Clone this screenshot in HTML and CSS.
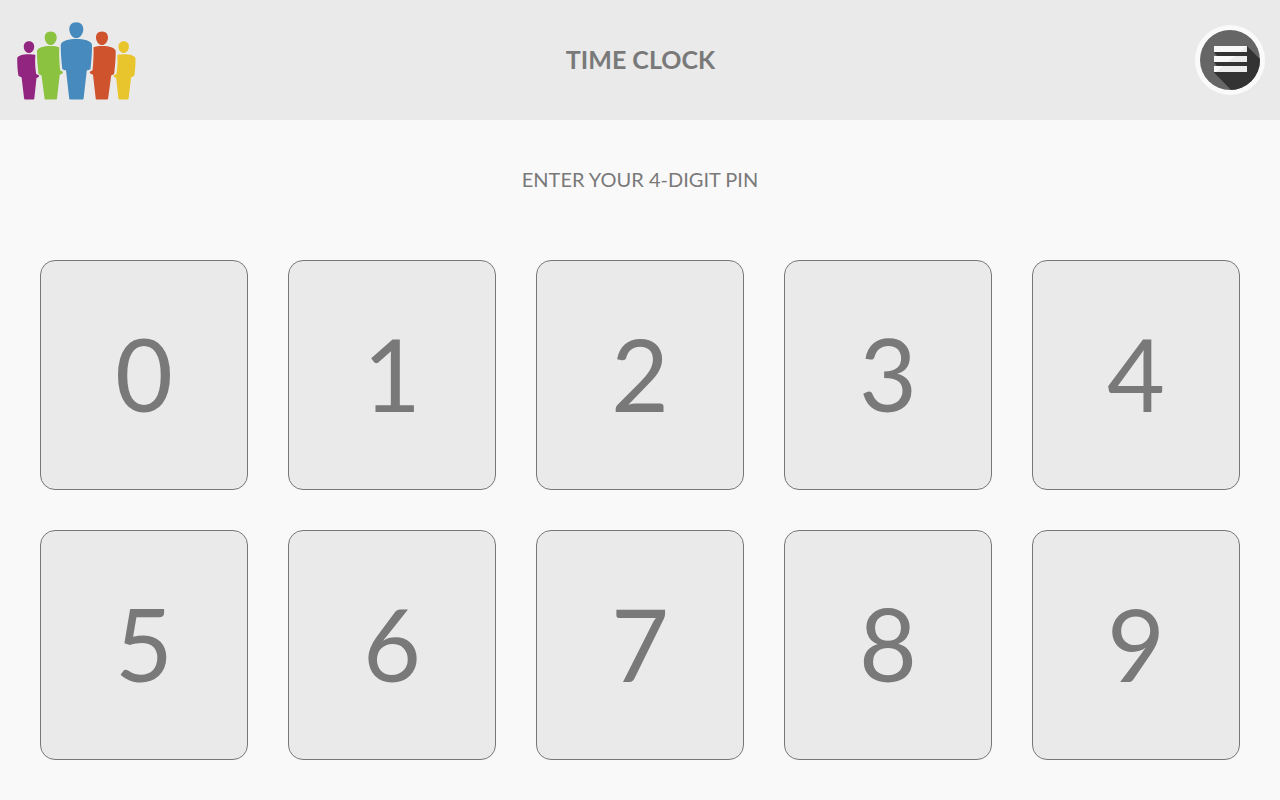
FILE: index.html
```html
<!DOCTYPE html>
<html lang="en">
<head>
<meta charset="utf-8">
<meta name="viewport" content="width=device-width, initial-scale=1">
<title>Time Clock</title>
<link rel="stylesheet" href="styles.css">
</head>
<body>
<header class="header">
  <svg class="logo" viewBox="16 20 121 80" role="img" aria-label="Company logo">
    <defs>
      <g id="outer">
        <path d="M29 41.300c3.500 0 5.400 2.600 5.200 5.700-.2 3.400-2.500 6.100-5.200 6.100s-5-2.700-5.200-6.100c-.2-3.100 1.700-5.700 5.200-5.700z"/>
        <path d="M17.200 58.500c.2-2.800 5.800-4.200 11-4.200 3 0 5.200.2 7.200.6-.6 6-.2 12.200.7 18.500.2 1 3.200 1.300 3.100 2.300-.2 1.500-1.800 2-2.700 2.300L34.300 98.500q-.1.900-1 .9h-8.200q-.9 0-1-.9L21.600 77.500l-3.200-1.700c-.8-5.700-1.300-11.500-1.200-17.300z"/>
      </g>
      <g id="inner">
        <path d="M50.700 31.400c4 0 6.200 2.900 6 6.300-.2 4-2.900 7.300-6 7.300s-5.800-3.300-6-7.300c-.2-3.400 2-6.300 6-6.300z"/>
        <path d="M37 51.300c.2-3.500 6.700-5.300 13.500-5.300 3.500 0 6.500.5 8.700 1.200-.3 7.600.2 15.600.9 22.800.2.800 2.900 1 2.900 2.200 0 1.600-1.900 1.700-3.300 2.600L57 98.500q-.1.900-1 .9H45.600q-.9 0-1-.9L41.500 75.500 38.600 74c-.9-7.500-1.700-15.100-1.600-22.700z"/>
      </g>
    </defs>
    <use href="#outer" fill="#91257f"/>
    <use href="#inner" fill="#8bc240"/>
    <path fill="#478bbe" d="M76.300 22.300c4.700 0 7.200 3.200 7 7.300-.2 4.800-3.300 8.600-7 8.600s-6.800-3.800-7-8.600c-.2-4.100 2.300-7.300 7-7.300zM60.800 44.600C61.500 40.900 69 39.100 76.400 39.100S91.300 40.900 92 44.600c.2 8-.6 16.600-1.500 24.300-.8.800-2.400 1.200-3.700 1.300L83.600 98.400q-.1 1-1 1H70.200q-.9 0-1-1L66 70.200c-1.300-.1-2.900-.5-3.700-1.300-.9-7.700-1.700-16.300-1.500-24.300z"/>
    <g transform="translate(152.700 0) scale(-1 1)">
      <use href="#inner" fill="#cf532c"/>
      <use href="#outer" fill="#e9c52d"/>
    </g>
  </svg>
  <h1 class="title">TIME CLOCK</h1>
  <button class="menu" type="button" aria-label="Menu">
    <svg class="menu-icon" viewBox="0 0 70 70" aria-hidden="true">
      <defs><clipPath id="disc"><circle cx="35" cy="35" r="30"/></clipPath></defs>
      <circle cx="35" cy="35" r="35" fill="#fafafa"/>
      <circle cx="35" cy="35" r="30" fill="#666"/>
      <path clip-path="url(#disc)" fill="#333" d="M52 21l20 20v31H43L19 47.500V47H52z"/>
      <path fill="#333" d="M19 27h33v4H22zM19 37h33v4H22z"/>
      <path fill="#f9f9f9" d="M19 21h33v6H19zM19 31h33v6H19zM19 41h33v6H19z"/>
      <path fill="#ececec" d="M52 21v6h-7zM52 31v6H33L40 31zM52 41v6H21L28 41z"/>
    </svg>
  </button>
</header>
<main class="main">
  <p class="prompt">ENTER YOUR 4-DIGIT PIN</p>
  <div class="keypad">
    <button class="key" type="button">0</button>
    <button class="key" type="button">1</button>
    <button class="key" type="button">2</button>
    <button class="key" type="button">3</button>
    <button class="key" type="button">4</button>
    <button class="key" type="button">5</button>
    <button class="key" type="button">6</button>
    <button class="key" type="button">7</button>
    <button class="key" type="button">8</button>
    <button class="key" type="button">9</button>
  </div>
</main>
</body>
</html>
```

FILE: styles.css
```css
* {
  box-sizing: border-box;
}

body {
  display: flex;
  flex-direction: column;
  min-height: 100vh;
  margin: 0;
  background: #f9f9f9;
  color: #797979;
  font-family: Lato, sans-serif;
}

.header {
  display: grid;
  grid-template-columns: 1fr auto 1fr;
  align-items: center;
  min-height: 120px;
  padding: 0 15px 0 16px;
  background: #eaeaea;
}

.logo {
  width: 121px;
  height: 80px;
}

.title {
  margin: 0;
  padding-bottom: 2px;
  font-size: 25px;
  line-height: 30px;
  font-weight: 700;
}

.menu {
  justify-self: end;
  padding: 0;
  border: 0;
  border-radius: 50%;
  background: none;
  cursor: pointer;
}

.menu-icon {
  display: block;
  width: 70px;
  height: 70px;
}

.main {
  display: flex;
  flex: 1;
  flex-direction: column;
}

.prompt {
  margin: 0;
  padding: 44px 20px 46px;
  font-size: 20px;
  line-height: 30px;
  text-align: center;
}

.keypad {
  display: grid;
  flex: 1;
  grid-template-columns: repeat(5, 1fr);
  grid-auto-rows: 1fr;
  gap: 40px;
  padding: 20px 40px 40px;
}

.key {
  padding: 0 0 4px;
  border: 1px solid #777;
  border-radius: 15px;
  background: #eaeaea;
  color: inherit;
  font: inherit;
  font-size: 100px;
  line-height: 120px;
  cursor: pointer;
}
```
